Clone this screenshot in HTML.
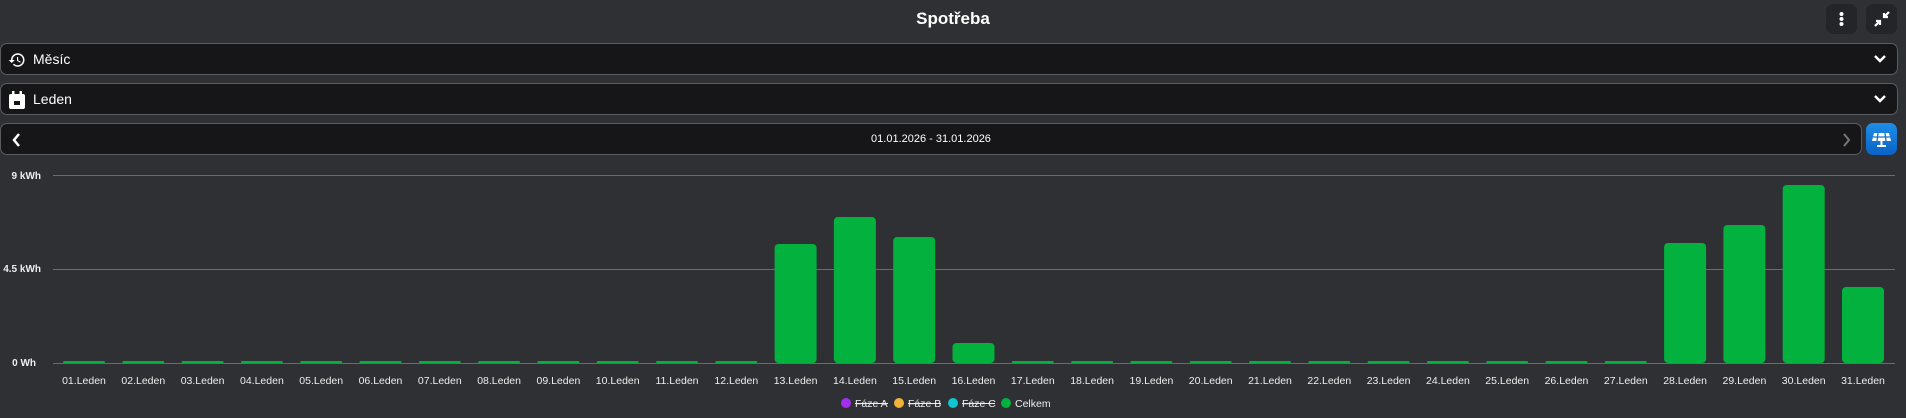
<!DOCTYPE html>
<html><head><meta charset="utf-8"><style>
*{margin:0;padding:0;box-sizing:border-box}
body{width:1906px;height:418px;background:#2f3034;font-family:"Liberation Sans",sans-serif;color:#fff;position:relative;overflow:hidden}
.title{position:absolute;top:9px;left:0;width:1906px;text-align:center;font-weight:bold;font-size:17px}
.btn{position:absolute;top:4px;width:31px;height:30px;background:#242528;border-radius:7px}
.dd{position:absolute;left:0;height:32px;background:#161618;border:1px solid #5a5b5f;border-radius:7px;font-size:14px}
.dd span{position:absolute;left:32px;top:7px}
</style></head><body>
<div class="title">Spotřeba</div>
<div class="btn" style="left:1826px"><svg width="31" height="30"><circle cx="15.5" cy="10" r="2" fill="#fff"/><circle cx="15.5" cy="15" r="2" fill="#fff"/><circle cx="15.5" cy="20" r="2" fill="#fff"/></svg></div>
<div class="btn" style="left:1866px"><svg width="31" height="30"><path d="M23 8 L18 13 M18 9 V13 H22" stroke="#fff" stroke-width="2.2" fill="none"/><path d="M9 22 L14 17 M10 17 H14 V21" stroke="#fff" stroke-width="2.2" fill="none"/></svg></div>

<div class="dd" style="top:43px;width:1898px"><svg style="position:absolute;left:7px;top:7px" width="18" height="18" viewBox="0 0 24 24"><path fill="#fff" d="M13.5 8H12v5l4.28 2.54.72-1.21-3.5-2.08V8M13 3a9 9 0 0 0-9 9H1l3.96 4.03L9 12H6a7 7 0 0 1 7-7 7 7 0 0 1 7 7 7 7 0 0 1-7 7c-1.93 0-3.68-.79-4.94-2.06l-1.42 1.42A8.9 8.9 0 0 0 13 21a9 9 0 0 0 9-9 9 9 0 0 0-9-9"/></svg><span>Měsíc</span><svg style="position:absolute;right:10px;top:9px" width="14" height="12"><path d="M2 3 L7 8 L12 3" stroke="#fff" stroke-width="2.5" fill="none"/></svg></div>
<div class="dd" style="top:83px;width:1898px"><svg style="position:absolute;left:8px;top:7px" width="16" height="18" viewBox="0 0 16 18"><rect x="0" y="3" width="16" height="15" rx="2" fill="#fff"/><rect x="3" y="0" width="2.5" height="4" fill="#fff"/><rect x="10.5" y="0" width="2.5" height="4" fill="#fff"/><rect x="5" y="10" width="6" height="4" fill="#161618"/></svg><span>Leden</span><svg style="position:absolute;right:10px;top:9px" width="14" height="12"><path d="M2 3 L7 8 L12 3" stroke="#fff" stroke-width="2.5" fill="none"/></svg></div>
<div class="dd" style="top:123px;width:1862px"><svg style="position:absolute;left:10px;top:8px" width="12" height="16"><path d="M8 2 L3 8 L8 14" stroke="#fff" stroke-width="2.5" fill="none"/></svg><div style="position:absolute;left:0;width:100%;top:9px;text-align:center;font-size:11px">01.01.2026 - 31.01.2026</div><svg style="position:absolute;right:10px;top:8px" width="10" height="16"><path d="M3 2 L8 8 L3 14" stroke="#777" stroke-width="2" fill="none"/></svg></div>
<div style="position:absolute;left:1866px;top:123px;width:31px;height:32px;border-radius:7px;background:linear-gradient(#1e8ee8,#0a62c4)"><svg width="31" height="32"><path d="M8 10 H23 L25 18 H6 Z" fill="#fff"/><path d="M12 10 L11 18 M19 10 L20 18 M7 14 H24" stroke="#1070d0" stroke-width="1.3"/><path d="M15.5 18 V23 M11 23 H20" stroke="#fff" stroke-width="2"/></svg></div>

<svg style="position:absolute;left:0;top:0" width="1906" height="418" font-family="Liberation Sans, sans-serif">
<g font-size="10" font-weight="bold" fill="#eee" text-anchor="end">
<text x="41" y="179">9 kWh</text><text x="41" y="272">4.5 kWh</text><text x="36" y="366">0 Wh</text></g>
<g stroke="#6a6b6f" stroke-width="1"><line x1="53" y1="175.5" x2="1895" y2="175.5"/><line x1="53" y1="269.5" x2="1895" y2="269.5"/><line x1="53" y1="363.5" x2="1895" y2="363.5"/></g>
<g id="bars" fill="#02b13e"></g>
<g id="lbl" font-size="10.5" fill="#eee" text-anchor="middle"></g>
<g font-size="10.5" fill="#eee">
<circle cx="846" cy="403" r="5" fill="#a42ef0"/><text x="855" y="407">Fáze A</text><line x1="855" y1="403.5" x2="888" y2="403.5" stroke="#eee"/>
<circle cx="899" cy="403" r="5" fill="#f0b23a"/><text x="908" y="407">Fáze B</text><line x1="908" y1="403.5" x2="941" y2="403.5" stroke="#eee"/>
<circle cx="953" cy="403" r="5" fill="#10c4d0"/><text x="962" y="407">Fáze C</text><line x1="962" y1="403.5" x2="995" y2="403.5" stroke="#eee"/>
<circle cx="1006" cy="403" r="5" fill="#02b13e"/><text x="1015" y="407">Celkem</text></g>
</svg>
<script>
var tops={13:244,14:217,15:237,16:343,28:243,29:225,30:185,31:287};
var b='',l='';
for(var i=1;i<=31;i++){var c=84+(i-1)*59.3;var t=tops[i]||361;var h=363-t;
b+='<rect x="'+(c-21)+'" y="'+t+'" width="42" height="'+h+'" rx="'+(h>6?4:1)+'"/>';
l+='<text x="'+c+'" y="384">'+(i<10?'0':'')+i+'.Leden</text>';}
document.getElementById('bars').innerHTML=b;document.getElementById('lbl').innerHTML=l;
</script>
</body></html>
